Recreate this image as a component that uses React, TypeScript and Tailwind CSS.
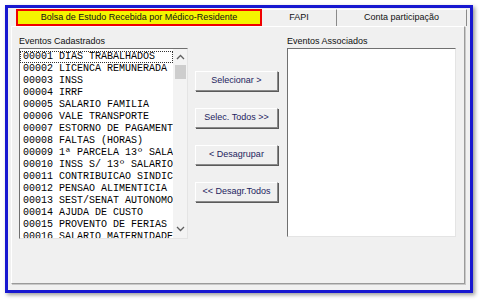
import React from "react";

const items = [
  "00001 DIAS TRABALHADOS",
  "00002 LICENCA REMUNERADA",
  "00003 INSS",
  "00004 IRRF",
  "00005 SALARIO FAMILIA",
  "00006 VALE TRANSPORTE",
  "00007 ESTORNO DE PAGAMENT",
  "00008 FALTAS (HORAS)",
  "00009 1ª PARCELA 13º SALA",
  "00010 INSS S/ 13º SALARIO",
  "00011 CONTRIBUICAO SINDIC",
  "00012 PENSAO ALIMENTICIA",
  "00013 SEST/SENAT AUTONOMO",
  "00014 AJUDA DE CUSTO",
  "00015 PROVENTO DE FERIAS",
  "00016 SALARIO MATERNIDADE",
];

const sans = { fontFamily: '"Liberation Sans", Arial, sans-serif' };
const mono = { fontFamily: '"Liberation Mono", "Courier New", monospace' };

function Btn({ label }: { label: string }) {
  return (
    <div className="w-[83px] h-[20px] bg-[#f0f0f0] border border-t-white border-l-white border-r-[#8a8a8a] border-b-[#8a8a8a] shadow-[1px_1px_0_#5a5a5a] flex items-center justify-center text-[9px] text-[#24245e]">
      {label}
    </div>
  );
}

export default function App() {
  return (
    <div className="w-[479px] h-[300px] bg-white pl-[5px] pt-[5px]" style={sans}>
      <div className="w-[468px] h-[288px] border-[3px] border-[#1818d0] bg-[#f0f0f0] shadow-[2px_2px_4px_rgba(0,0,0,0.4)] flex flex-col">
        {/* tab strip */}
        <div className="h-[18px] flex items-end pl-[8px] text-[9px] text-[#111]">
          <div className="w-[246px] h-[17px] bg-[#f4f400] border-2 border-[#f00000] flex items-center justify-center">
            Bolsa de Estudo Recebida por Médico-Residente
          </div>
          <div className="w-[75px] h-[17px] border-t border-white flex items-center justify-center border-r border-r-[#8a8a8a]">
            FAPI
          </div>
          <div className="w-[130px] h-[17px] border-t border-white flex items-center justify-center border-r border-r-[#8a8a8a]">
            Conta participação
          </div>
        </div>
        {/* panel */}
        <div className="ml-[3px] w-[454px] h-[258px] border border-t-white border-l-white border-r-[#9a9a9a] border-b-[#9a9a9a] shadow-[1px_1px_0_#c8c8c8] flex pl-[7px] pt-[8px] text-[9px] text-[#111]">
          {/* left column */}
          <div className="flex flex-col w-[169px]">
            <div className="h-[13px] leading-[12px]">Eventos Cadastrados</div>
            <div className="h-[191px] bg-white border border-t-[#707070] border-l-[#707070] border-r-[#e4e4e4] border-b-[#e4e4e4] flex overflow-hidden">
              <div className="flex-1 overflow-hidden pt-[2px]" style={mono}>
                {items.map((t, i) => (
                  <div
                    key={t}
                    className={
                      "h-[12px] leading-[12px] text-[10px] pl-[3px] whitespace-nowrap text-black " +
                      (i === 0 ? "outline outline-1 outline-dotted outline-[#333] -outline-offset-1" : "")
                    }
                  >
                    {t}
                  </div>
                ))}
              </div>
              <div className="w-[14px] bg-[#f3f3f3] flex flex-col items-center relative">
                <svg width="9" height="6" viewBox="0 0 9 6" className="mt-[5px]">
                  <path d="M1 5 L4.5 1.5 L8 5" fill="none" stroke="#606060" strokeWidth="1.3" />
                </svg>
                <div className="w-[11px] h-[14px] bg-[#cdcdcd] mt-[5px]" />
                <div className="flex-1" />
                <svg width="9" height="6" viewBox="0 0 9 6" className="mb-[6px]">
                  <path d="M1 1 L4.5 4.5 L8 1" fill="none" stroke="#606060" strokeWidth="1.3" />
                </svg>
              </div>
            </div>
          </div>
          {/* buttons */}
          <div className="ml-[7px] pt-[36px] flex flex-col gap-[17px]">
            <Btn label="Selecionar >" />
            <Btn label="Selec. Todos >>" />
            <Btn label="< Desagrupar" />
            <Btn label="<< Desagr.Todos" />
          </div>
          {/* right column */}
          <div className="ml-[9px] flex flex-col w-[169px]">
            <div className="h-[13px] leading-[12px]">Eventos Associados</div>
            <div className="h-[189px] bg-white border border-t-[#707070] border-l-[#707070] border-r-[#e4e4e4] border-b-[#e4e4e4]" />
          </div>
        </div>
      </div>
    </div>
  );
}
